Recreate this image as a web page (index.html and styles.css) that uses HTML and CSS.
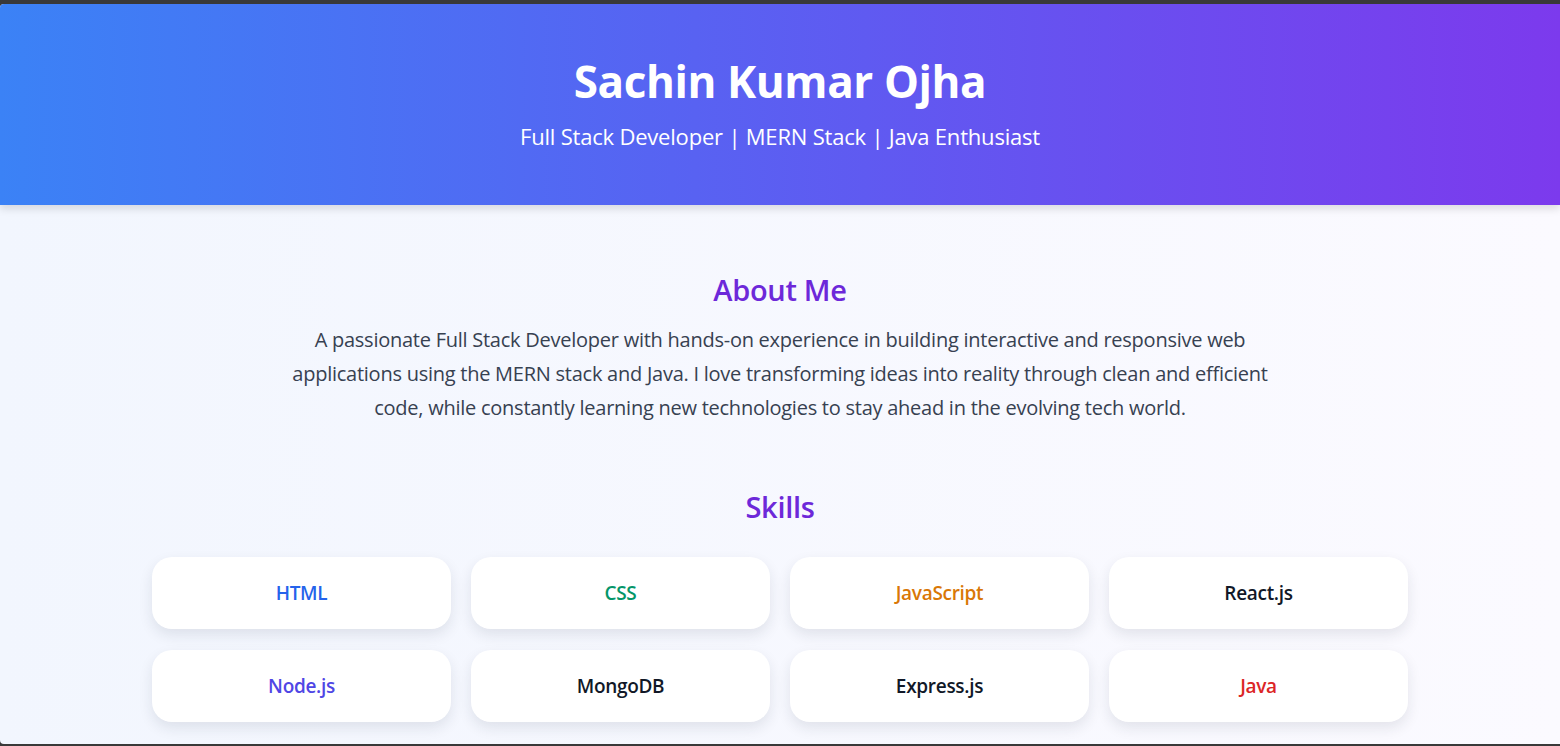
FILE: index.html
```html
<!DOCTYPE html>
<html lang="en">
<head>
    <meta charset="UTF-8">
    <meta name="viewport" content="width=device-width, initial-scale=1.0">
    <title>Sachin Kumar Ojha | Portfolio</title>
    <link rel="stylesheet" href="styles.css">
</head>
<body>
    <div class="window">
        <header class="hero">
            <h1>Sachin Kumar Ojha</h1>
            <p>Full Stack Developer | MERN Stack | Java Enthusiast</p>
        </header>

        <main class="content">
            <section class="about">
                <h2>About Me</h2>
                <p>A passionate Full Stack Developer with hands-on experience in building interactive and responsive web applications using the MERN stack and Java. I love transforming ideas into reality through clean and efficient code, while constantly learning new technologies to stay ahead in the evolving tech world.</p>
            </section>

            <section class="skills">
                <h2>Skills</h2>
                <div class="skill-grid">
                    <div class="skill html">HTML</div>
                    <div class="skill css">CSS</div>
                    <div class="skill js">JavaScript</div>
                    <div class="skill dark">React.js</div>
                    <div class="skill node">Node.js</div>
                    <div class="skill dark">MongoDB</div>
                    <div class="skill dark">Express.js</div>
                    <div class="skill java">Java</div>
                </div>
            </section>
        </main>
    </div>
</body>
</html>
```

FILE: styles.css
```css
html, body {
    margin: 0;
    height: 100%;
}
body {
    background: #393939; /* marco oscuro de la ventana */
    padding-top: 4px;
    box-sizing: border-box;
    font-family: "Open Sans", "Noto Sans", sans-serif;
}
.window {
    height: 740px;
    overflow: hidden;
    border-radius: 4px 0 0 4px;
    background: linear-gradient(90deg, #f2f6fe, #fbfaff);
}
.hero {
    height: 201px;
    box-sizing: border-box;
    padding-top: 47px;
    text-align: center;
    color: #fff;
    background: linear-gradient(90deg, #3b82f6, #7c3aed);
    box-shadow: 0 4px 8px rgba(0, 0, 0, 0.12);
    position: relative;
}
.hero h1 {
    margin: 0;
    font-size: 44px;
    font-weight: 700;
    line-height: 60px;
    letter-spacing: -0.4px;
}
.hero p {
    margin: 8px 0 0;
    font-size: 22px;
    line-height: 34px;
    letter-spacing: -0.2px;
}
.content {
    max-width: 1256px;
    margin: 0 auto;
    padding-top: 66px;
}
h2 {
    margin: 0;
    text-align: center;
    color: #6d28d9;
    font-size: 29px;
    font-weight: 600;
    line-height: 38px;
    letter-spacing: -0.3px;
}
.about p {
    max-width: 1000px;
    margin: 14px auto 0;
    text-align: center;
    color: #374151;
    font-size: 20px;
    line-height: 34px;
    letter-spacing: -0.25px;
}
.skills {
    margin-top: 63px;
}
.skill-grid {
    display: grid;
    grid-template-columns: repeat(4, 1fr);
    gap: 21px 20px;
    margin-top: 31px;
}
.skill {
    height: 72px;
    display: flex;
    align-items: center;
    justify-content: center;
    background: #fff;
    border-radius: 20px;
    box-shadow: 0 6px 14px rgba(30, 41, 59, 0.1);
    font-size: 19px;
    font-weight: 600;
    letter-spacing: -0.3px;
}
.html { color: #2563eb; }
.css { color: #059669; }
.js { color: #d97706; }
.node { color: #4f46e5; }
.java { color: #dc2626; }
.dark { color: #111827; }
```
